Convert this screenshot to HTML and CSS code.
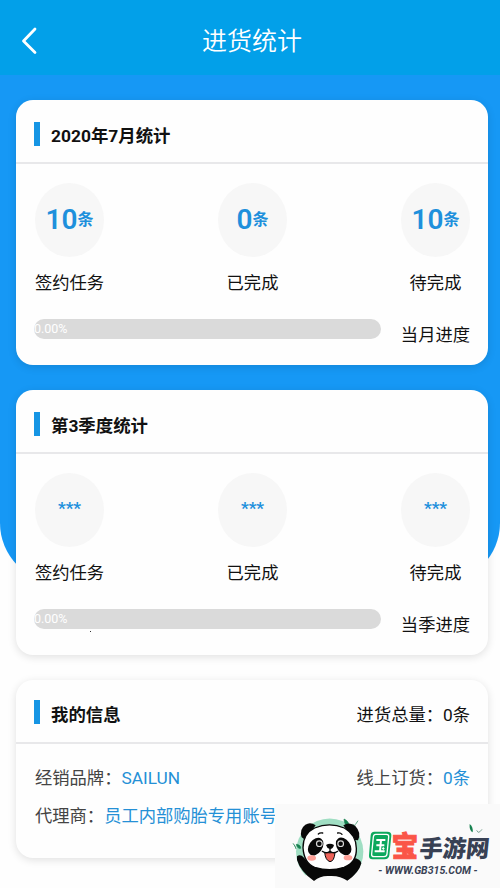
FILE: index.html
```html
<!DOCTYPE html>
<html lang="zh-CN">
<head>
<meta charset="utf-8">
<title>进货统计</title>
<link rel="stylesheet" href="styles.css">
</head>
<body>
<div class="page">
  <header class="topbar">
    <svg class="back" viewBox="0 0 16 28"><path d="M14 2 2.500 14 14 25.500"/></svg>
    <h1>进货统计</h1>
  </header>
  <main class="content">
    <section class="card">
      <div class="card-head"><i class="mark"></i><h2>2020年7月统计</h2></div>
      <div class="stats">
        <div class="stat"><div class="disc"><b>10</b><span>条</span></div><p>签约任务</p></div>
        <div class="stat"><div class="disc"><b>0</b><span>条</span></div><p>已完成</p></div>
        <div class="stat"><div class="disc"><b>10</b><span>条</span></div><p>待完成</p></div>
      </div>
      <div class="progress"><div class="bar">0.00%</div><p>当月进度</p></div>
    </section>
    <section class="card">
      <div class="card-head"><i class="mark"></i><h2>第3季度统计</h2></div>
      <div class="stats">
        <div class="stat"><div class="disc masked"><span>***</span></div><p>签约任务</p></div>
        <div class="stat"><div class="disc masked"><span>***</span></div><p>已完成</p></div>
        <div class="stat"><div class="disc masked"><span>***</span></div><p>待完成</p></div>
      </div>
      <div class="progress"><div class="bar">0.00%</div><p>当季进度</p></div>
    </section>
    <section class="card info">
      <div class="card-head"><i class="mark"></i><h2>我的信息</h2><p class="total">进货总量：0条</p></div>
      <div class="rows">
        <div class="row"><p>经销品牌：<em>SAILUN</em></p><p>线上订货：<em>0条</em></p></div>
        <div class="row"><p>代理商：<em>员工内部购胎专用账号</em></p></div>
      </div>
    </section>
  </main>
  <i class="speck"></i>
  <svg class="watermark" viewBox="0 12 675 252">
    <rect y="12" width="675" height="252" fill="#fafafa"/>
    <path d="M91 226A101 101 0 1 1 237 226Z" fill="#a0dec3"/>
    <path d="M207 57q18 8 13 23q-12-5-13-23M64 133q14 2 13 12q-10 2-13-12M54 130q8 8 9 17M233 73l8 4M241 74l8-12" fill="#16814f" stroke="#16814f" stroke-width="2"/>
    <g fill="#080808">
      <path d="M80 112Q72 88 91 74Q106 64 122 76L90 119Z"/>
      <path d="M205 76Q224 64 241 78Q260 98 249 121L235 119Z"/>
      <path d="M66 169Q76 161 87 173L106 196Q162 218 216 194Q215 175 234 173Q257 176 259 190Q252 219 217 242Q195 226 163 228Q137 226 117 243Q77 216 66 180Z"/>
    </g>
    <path d="M84 143Q84 101 119 84Q163 65 208 84Q244 105 244 145Q246 187 207 202Q164 216 119 202Q87 190 84 143Z" fill="#fff" stroke="#080808" stroke-width="4"/>
    <g fill="#080808">
      <ellipse cx="122" cy="140" rx="20" ry="29" transform="rotate(35 122 140)"/>
      <ellipse cx="206" cy="139" rx="20" ry="29" transform="rotate(-35 206 139)"/>
      <path d="M153 135Q165 127 177 135Q174 147 165 147Q155 144 153 135Z"/>
    </g>
    <g fill="#080808" stroke="#d8d8d8" stroke-width="3.5"><circle cx="133" cy="131" r="8.500"/><circle cx="197" cy="131" r="8.500"/></g>
    <g fill="#ffa198"><ellipse cx="110" cy="174" rx="13" ry="8"/><ellipse cx="219" cy="173" rx="13" ry="8"/></g>
    <path d="M149 157Q165 160 180 157Q178 184 165 185Q151 181 149 157Z" fill="#ee6258" stroke="#080808" stroke-width="3"/>
    <path d="M165 146v11M142 154q12 9 23 0q11 9 23 0M130 102q5-5 13-3M188 99q8-2 13 4" fill="none" stroke="#080808" stroke-width="4" stroke-linecap="round"/>
    <g transform="translate(270 45)">
      <path d="M28 50H67Q80 50 79 62L73 121Q71 133 59 133H22Q11 133 12 121L17 61Q18 50 28 50Z" fill="#0ba85d"/>
      <path d="M32 58H64Q72 58 71 66L66 117Q65 125 57 125H27Q19 125 20 117L25 66Q26 58 32 58Z" fill="none" stroke="#fff" stroke-width="4"/>
      <path d="M34 75H61M34 91H58M29 109H59M48 75L45 109M53 98l4 5" fill="none" stroke="#fff" stroke-width="6"/>
      <g class="logo-type">
        <text class="bao" x="80" y="125" textLength="79" lengthAdjust="spacingAndGlyphs">宝</text>
        <text class="site" transform="translate(161 126) skewX(-6)" textLength="210" lengthAdjust="spacingAndGlyphs">手游网</text>
        <text class="url" x="40" y="178" textLength="298" lengthAdjust="spacingAndGlyphs">- WWW.GB315.COM -</text>
      </g>
      <path d="M314 27q11 8 9 25q-11-5-9-25" fill="#16814f"/><path d="M335 46q4 10 10 4l6-7" fill="none" stroke="#7fa596" stroke-width="3"/>
    </g>
  </svg>
</div>
</body>
</html>
```
FILE: styles.css
```css
* { box-sizing: border-box; }
body { margin: 0; background: #fff; }
h1, h2, p { margin: 0; }
em { font-style: normal; color: #2590d6; }
.page {
  position: relative;
  width: 500px;
  height: 888px;
  overflow: hidden;
  font: 17.3px/24px Roboto, "Noto Sans CJK SC", sans-serif;
  color: #111;
  background: #fefefe;
}
.topbar {
  display: flex;
  align-items: center;
  height: 75px;
  padding: 7px 21px 0;
  background: #02a0e9;
}
.back { width: 16px; height: 28px; fill: none; stroke: #fff; stroke-width: 2.8; stroke-linecap: round; stroke-linejoin: round; }
.topbar h1 { flex: 1; padding: 1px 12px 0 0; text-align: center; color: #fff; font-size: 25px; font-weight: 350; line-height: 36px; }
.content {
  display: flex;
  flex-direction: column;
  gap: 25px;
  padding: 25px 12px 0 16px;
  position: relative;
  isolation: isolate;
}
.content::before {
  content: "";
  position: absolute;
  z-index: -1;
  left: 0;
  top: 0;
  width: 500px;
  height: 508px;
  border-radius: 0 0 60px 60px;
  background: #1698f5;
}
.card { height: 265px; border-radius: 17px; background: #fefefe; box-shadow: 0 2px 9px rgba(0, 0, 0, .12); }
.card-head { display: flex; align-items: center; height: 64px; padding: 8px 18px 0 18px; border-bottom: 2px solid #e8e8ea; }
.mark { width: 6px; height: 24px; margin: 0 11px 3px 0; background: #1695e4; }
h2 { font-size: 17.4px; font-weight: 700; line-height: 24px; padding-top: 2px; }
.total { margin-left: auto; padding-top: 3px; }
.stats { display: flex; justify-content: space-between; padding: 19px 18px 0 19px; }
.stat { text-align: center; width: 69px; white-space: nowrap; }
.disc { display: flex; align-items: center; justify-content: center; height: 74px; border-radius: 50%; background: #f7f7f7; color: #1e90dc; font-weight: 700; line-height: 72px; }
.disc b { font-size: 28px; font-weight: 600; }
.disc span { font-size: 16px; }
.disc.masked span { font-size: 17px; padding-bottom: 4px; }
.stat p { margin-top: 14px; }
.progress { display: flex; justify-content: space-between; padding: 24px 18px 0; }
.bar { width: 347px; height: 20px; border-radius: 10px; background: #dadada; color: #fff; font-size: 12.5px; line-height: 19px; }
.progress p { padding-top: 4px; }
.info { height: 178px; }
.info .card-head { padding-top: 5px; }
.rows { padding: 22px 18px 0 19px; color: #444; }
.row { display: flex; justify-content: space-between; margin-bottom: 14px; }
.speck { position: absolute; left: 90px; top: 631px; width: 1px; height: 1px; background: #333; }
.watermark { position: absolute; left: 275px; top: 804px; width: 225px; height: 84px; }
.logo-type { font-family: Roboto, "Noto Sans CJK SC", sans-serif; font-weight: 900; }
.bao { font-size: 84px; fill: #fa5547; stroke: #fa5547; stroke-width: 3; }
.site { font-size: 71px; fill: #384154; }
.url { font-size: 32px; font-style: italic; font-weight: 700; fill: #384154; }
```
